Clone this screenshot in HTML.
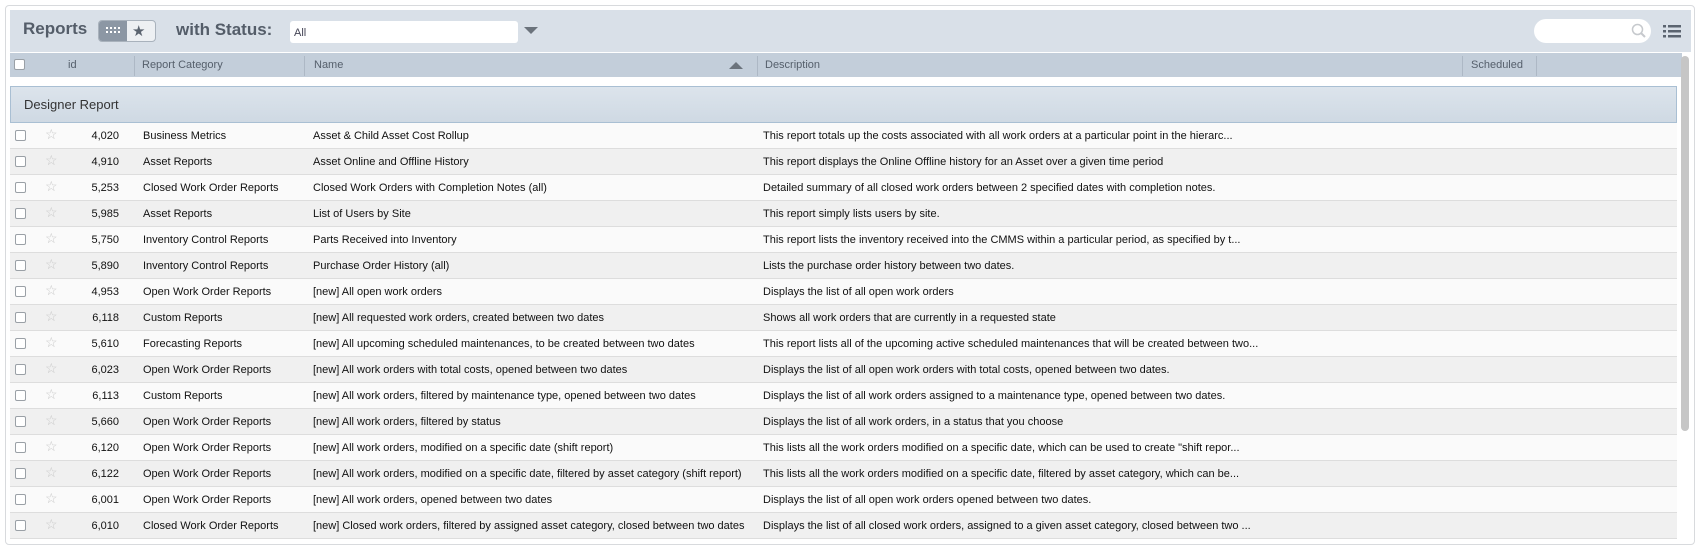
<!DOCTYPE html>
<html><head><meta charset="utf-8"><style>
*{margin:0;padding:0;box-sizing:border-box}
body{width:1702px;height:540px;background:#fff;font-family:"Liberation Sans",sans-serif;position:relative;overflow:hidden;color:#111}
.a{position:absolute}
.frame{left:5px;top:5px;width:1690px;height:540px;border:1px solid #d8dadd;border-radius:4px}
.tb{left:10px;top:10px;width:1681px;height:42px;background:#d9e0e8}
.hd{left:10px;top:53px;width:1672px;height:24px;background:#c3ceda;font-size:11px;color:#555f6b}
.hd span{position:absolute;top:6px}
.vl{position:absolute;top:3px;width:1px;height:20px;background:#adb8c5}
.grp{left:10px;top:86px;width:1667px;height:37px;background:linear-gradient(#dce4ec,#cfd9e3);border:1px solid #a9bfd3;font-size:13px;color:#333;padding:10px 0 0 13px}
.row{position:absolute;left:10px;width:1667px;height:26px;border-bottom:1px solid #ddd;font-size:11px;color:#111}
.row span{position:absolute;top:7px;white-space:nowrap}
.cb{position:absolute;left:5px;top:7px;width:11px;height:11px;border:1px solid #9aa0a6;border-radius:2px;background:#fff}
.st{position:absolute;left:35px;top:3px;color:#c9c9c9;font-size:14px}
.row span.n{right:1558px}
</style></head><body>
<div class="a frame"></div>
<div class="a tb">
 <div class="a" style="left:13px;top:9px;font-size:17px;font-weight:bold;color:#545d69">Reports</div>
 <div class="a" style="left:88px;top:10px;width:58px;height:22px;border-radius:4px;background:#edf0f3;border:1px solid #a9b2bc;overflow:hidden">
  <div class="a" style="left:0;top:0;width:28px;height:22px;background:#8c97a4"></div>
  <div class="a" style="left:7px;top:6px;width:14px;height:2px;border-top:2px dotted #fff"></div>
  <div class="a" style="left:7px;top:10px;width:14px;height:2px;border-top:2px dotted #fff"></div>
  <div class="a" style="left:33px;top:1px;font-size:15px;color:#5b6470">★</div>
 </div>
 <div class="a" style="left:166px;top:10px;font-size:17px;font-weight:bold;color:#545d69">with Status:</div>
 <div class="a" style="left:280px;top:11px;width:228px;height:22px;background:#fff;border-radius:3px;font-size:11px;color:#445;padding:6px 0 0 4px">All</div>
 <div class="a" style="left:514px;top:17px;width:0;height:0;border-left:7px solid transparent;border-right:7px solid transparent;border-top:7px solid #6b737c"></div>
 <div class="a" style="left:1524px;top:9px;width:117px;height:24px;background:#fff;border-radius:12px"></div>
 <svg class="a" style="left:1621px;top:13px" width="16" height="16"><circle cx="6.5" cy="6.5" r="5" fill="none" stroke="#c6c9cd" stroke-width="1.5"/><line x1="10" y1="10" x2="14" y2="14" stroke="#c6c9cd" stroke-width="2"/></svg>
 <svg class="a" style="left:1653px;top:14px" width="18" height="15"><g fill="#5b6470"><rect x="0" y="1" width="3" height="2.5"/><rect x="5" y="1" width="13" height="2.5"/><rect x="0" y="6" width="3" height="2.5"/><rect x="5" y="6" width="13" height="2.5"/><rect x="0" y="11" width="3" height="2.5"/><rect x="5" y="11" width="13" height="2.5"/></g></svg>
</div>
<div class="a hd">
 <div class="cb" style="top:6px;left:4px"></div>
 <span style="left:58px">id</span>
 <div class="vl" style="left:124px"></div><span style="left:132px">Report Category</span>
 <div class="vl" style="left:294px"></div><span style="left:304px">Name</span>
 <div class="a" style="left:719px;top:9px;border-left:7px solid transparent;border-right:7px solid transparent;border-bottom:7px solid #6b737c"></div>
 <div class="vl" style="left:747px"></div><span style="left:755px">Description</span>
 <div class="vl" style="left:1452px"></div><span style="left:1461px">Scheduled</span>
 <div class="vl" style="left:1526px"></div>
</div>
<div class="a" style="left:1681px;top:56px;width:8px;height:375px;background:#c6c6c6;border-radius:4px"></div>
<div class="a grp">Designer Report</div>
<div class="row" style="top:123px;background:#fafafa"><div class="cb"></div><div class="st">☆</div><span class="n">4,020</span><span style="left:133px">Business Metrics</span><span style="left:303px">Asset &amp; Child Asset Cost Rollup</span><span style="left:753px">This report totals up the costs associated with all work orders at a particular point in the hierarc...</span></div>
<div class="row" style="top:149px;background:#f0f0f0"><div class="cb"></div><div class="st">☆</div><span class="n">4,910</span><span style="left:133px">Asset Reports</span><span style="left:303px">Asset Online and Offline History</span><span style="left:753px">This report displays the Online Offline history for an Asset over a given time period</span></div>
<div class="row" style="top:175px;background:#fafafa"><div class="cb"></div><div class="st">☆</div><span class="n">5,253</span><span style="left:133px">Closed Work Order Reports</span><span style="left:303px">Closed Work Orders with Completion Notes (all)</span><span style="left:753px">Detailed summary of all closed work orders between 2 specified dates with completion notes.</span></div>
<div class="row" style="top:201px;background:#f0f0f0"><div class="cb"></div><div class="st">☆</div><span class="n">5,985</span><span style="left:133px">Asset Reports</span><span style="left:303px">List of Users by Site</span><span style="left:753px">This report simply lists users by site.</span></div>
<div class="row" style="top:227px;background:#fafafa"><div class="cb"></div><div class="st">☆</div><span class="n">5,750</span><span style="left:133px">Inventory Control Reports</span><span style="left:303px">Parts Received into Inventory</span><span style="left:753px">This report lists the inventory received into the CMMS within a particular period, as specified by t...</span></div>
<div class="row" style="top:253px;background:#f0f0f0"><div class="cb"></div><div class="st">☆</div><span class="n">5,890</span><span style="left:133px">Inventory Control Reports</span><span style="left:303px">Purchase Order History (all)</span><span style="left:753px">Lists the purchase order history between two dates.</span></div>
<div class="row" style="top:279px;background:#fafafa"><div class="cb"></div><div class="st">☆</div><span class="n">4,953</span><span style="left:133px">Open Work Order Reports</span><span style="left:303px">[new] All open work orders</span><span style="left:753px">Displays the list of all open work orders</span></div>
<div class="row" style="top:305px;background:#f0f0f0"><div class="cb"></div><div class="st">☆</div><span class="n">6,118</span><span style="left:133px">Custom Reports</span><span style="left:303px">[new] All requested work orders, created between two dates</span><span style="left:753px">Shows all work orders that are currently in a requested state</span></div>
<div class="row" style="top:331px;background:#fafafa"><div class="cb"></div><div class="st">☆</div><span class="n">5,610</span><span style="left:133px">Forecasting Reports</span><span style="left:303px">[new] All upcoming scheduled maintenances, to be created between two dates</span><span style="left:753px">This report lists all of the upcoming active scheduled maintenances that will be created between two...</span></div>
<div class="row" style="top:357px;background:#f0f0f0"><div class="cb"></div><div class="st">☆</div><span class="n">6,023</span><span style="left:133px">Open Work Order Reports</span><span style="left:303px">[new] All work orders with total costs, opened between two dates</span><span style="left:753px">Displays the list of all open work orders with total costs, opened between two dates.</span></div>
<div class="row" style="top:383px;background:#fafafa"><div class="cb"></div><div class="st">☆</div><span class="n">6,113</span><span style="left:133px">Custom Reports</span><span style="left:303px">[new] All work orders, filtered by maintenance type, opened between two dates</span><span style="left:753px">Displays the list of all work orders assigned to a maintenance type, opened between two dates.</span></div>
<div class="row" style="top:409px;background:#f0f0f0"><div class="cb"></div><div class="st">☆</div><span class="n">5,660</span><span style="left:133px">Open Work Order Reports</span><span style="left:303px">[new] All work orders, filtered by status</span><span style="left:753px">Displays the list of all work orders, in a status that you choose</span></div>
<div class="row" style="top:435px;background:#fafafa"><div class="cb"></div><div class="st">☆</div><span class="n">6,120</span><span style="left:133px">Open Work Order Reports</span><span style="left:303px">[new] All work orders, modified on a specific date (shift report)</span><span style="left:753px">This lists all the work orders modified on a specific date, which can be used to create "shift repor...</span></div>
<div class="row" style="top:461px;background:#f0f0f0"><div class="cb"></div><div class="st">☆</div><span class="n">6,122</span><span style="left:133px">Open Work Order Reports</span><span style="left:303px">[new] All work orders, modified on a specific date, filtered by asset category (shift report)</span><span style="left:753px">This lists all the work orders modified on a specific date, filtered by asset category, which can be...</span></div>
<div class="row" style="top:487px;background:#fafafa"><div class="cb"></div><div class="st">☆</div><span class="n">6,001</span><span style="left:133px">Open Work Order Reports</span><span style="left:303px">[new] All work orders, opened between two dates</span><span style="left:753px">Displays the list of all open work orders opened between two dates.</span></div>
<div class="row" style="top:513px;background:#f0f0f0"><div class="cb"></div><div class="st">☆</div><span class="n">6,010</span><span style="left:133px">Closed Work Order Reports</span><span style="left:303px">[new] Closed work orders, filtered by assigned asset category, closed between two dates</span><span style="left:753px">Displays the list of all closed work orders, assigned to a given asset category, closed between two ...</span></div>
</body></html>
